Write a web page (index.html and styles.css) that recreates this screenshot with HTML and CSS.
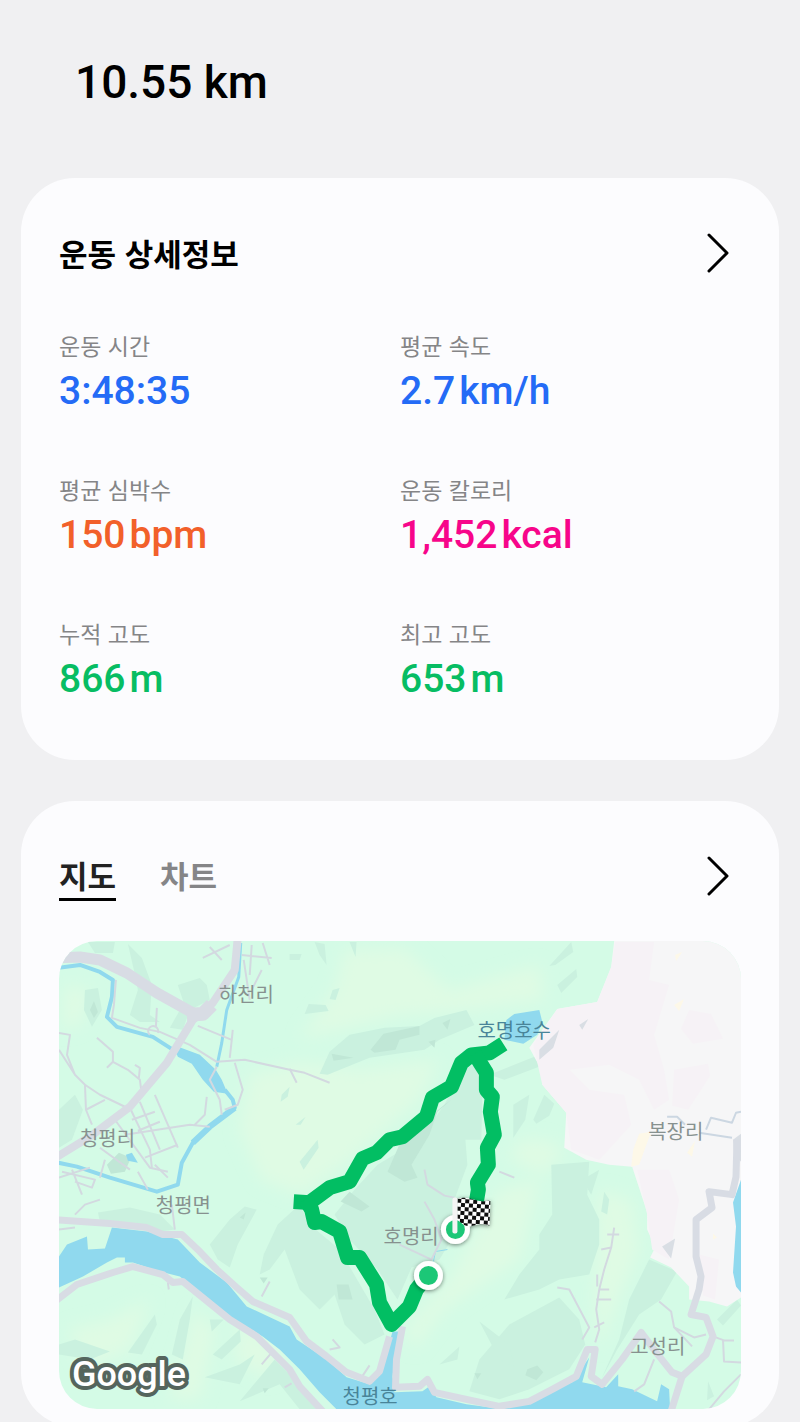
FILE: index.html
```html
<!DOCTYPE html>
<html lang="ko">

<head>
    <meta charset="UTF-8">
    <meta name="viewport" content="width=device-width, initial-scale=1.0">
    <title>운동 상세정보</title>
    <link rel="stylesheet" href="styles.css">
</head>

<body>
    <main class="container">
        <h1 class="distance">10.55 km</h1>

        <section class="card">
            <div class="card-header">
                <h2>운동 상세정보</h2>
                <button class="more" type="button" aria-label="운동 상세정보 더보기">
                    <svg viewBox="0 0 24 40"><path d="M2 2 L20 20 L2 38" /></svg>
                </button>
            </div>
            <dl class="stats">
                <div class="stat time">
                    <dt>운동 시간</dt>
                    <dd>3:48:35</dd>
                </div>
                <div class="stat speed">
                    <dt>평균 속도</dt>
                    <dd>2.7<span>km/h</span></dd>
                </div>
                <div class="stat heart">
                    <dt>평균 심박수</dt>
                    <dd>150<span>bpm</span></dd>
                </div>
                <div class="stat calorie">
                    <dt>운동 칼로리</dt>
                    <dd>1,452<span>kcal</span></dd>
                </div>
                <div class="stat altitude">
                    <dt>누적 고도</dt>
                    <dd>866<span>m</span></dd>
                </div>
                <div class="stat altitude">
                    <dt>최고 고도</dt>
                    <dd>653<span>m</span></dd>
                </div>
            </dl>
        </section>

        <section class="card map-card">
            <div class="card-header">
                <div class="tabs" role="tablist">
                    <button class="tab active" type="button" role="tab" aria-selected="true">지도</button>
                    <button class="tab" type="button" role="tab" aria-selected="false">차트</button>
                </div>
                <button class="more" type="button" aria-label="지도 더보기">
                    <svg viewBox="0 0 24 40"><path d="M2 2 L20 20 L2 38" /></svg>
                </button>
            </div>

            <svg class="map" viewBox="59 941 683 469">
                <defs>
                    <pattern id="checker" width="8" height="8" patternUnits="userSpaceOnUse" patternTransform="translate(458 1199) rotate(4)">
                        <rect width="8" height="8" fill="#fff" />
                        <path d="M0 0h4v4h-4z M4 4h4v4h-4z" fill="#111" />
                    </pattern>
                    <filter id="soft" x="-20%" y="-20%" width="140%" height="140%">
                        <feGaussianBlur stdDeviation="8" />
                    </filter>
                    <filter id="shadow" x="-30%" y="-30%" width="160%" height="160%">
                        <feDropShadow dx="0" dy="1" stdDeviation="2" flood-opacity="0.5" />
                    </filter>
                </defs>

                <rect class="land" x="59" y="941" width="683" height="469" />

                <!-- low hills -->
                <g class="hill" filter="url(#soft)">
                    <path d="M250 1075 L300 1062 L360 1070 L440 1060 L420 1100 L345 1165 L300 1195 L262 1180 L240 1130Z" />
                    <path d="M345 950 L405 948 L450 990 L540 965 L545 1000 L470 1010 L400 1015 L340 1030 L300 1040 L335 990Z" />
                    <path d="M600 1190 L632 1200 L640 1250 L615 1310 L600 1350 L595 1300Z" />
                    <path d="M500 1190 L540 1180 L520 1260 L445 1310 L415 1350 L405 1330 L450 1280Z" />
                    <path d="M68 1330 L110 1320 L150 1300 L130 1350 L85 1370Z" />
                    <path d="M195 1310 L215 1330 L200 1400 L170 1400Z" />
                    <path d="M65 985 L90 990 L80 1025 L62 1030Z" />
                    <path d="M545 1140 L565 1150 L545 1175 L510 1160 L520 1140Z" />
                    <path d="M240 1320 L285 1350 L270 1380 L235 1360Z" />
                </g>

                <!-- forest shading -->
                <g class="forest">
                    <path d="M320 1074 L330 1052 L350 1035 L385 1028 L420 1026 L435 1018 L467 1010 L475 1025 L440 1040 L425 1050 L370 1058 L328 1075Z" />
                    <path d="M128 944 L142 958 L152 985 L150 1015 L160 1022 L140 1022 L130 1015 L138 990 L134 970Z" />
                    <path d="M178 985 L200 978 L207 985 L210 1000 L190 1010 L183 1030 L170 1028 L184 1003Z" />
                    <path d="M85 990 L98 988 L102 1010 L92 1027 L84 1010Z" />
                    <path d="M59 1110 L75 1095 L83 1110 L72 1140 L59 1148Z" />
                    <path d="M88 942 L115 942 L113 953 L95 953Z" />
                    <path d="M464 1068 L476 1065 L483 1090 L482 1140 L466 1140 L468 1165 L455 1200 L455 1235 L440 1260 L412 1268 L398 1300 L378 1270 L350 1240 L335 1215 L355 1190 L378 1165 L420 1140 L445 1105Z" />
                    <path d="M210 1245 L230 1220 L245 1207 L257 1210 L238 1245 L230 1268 L218 1260Z" />
                    <path d="M260 1275 L264 1255 L278 1225 L300 1205 L310 1225 L340 1250 L375 1310 L385 1335 L365 1345 L345 1325 L335 1295 L320 1310 L300 1290 L285 1250 L270 1270Z" />
                    <path d="M98 1213 L130 1208 L160 1215 L175 1230 L160 1232 L100 1222Z" />
                    <path d="M59 1345 L75 1340 L110 1352 L90 1360 L59 1355Z" />
                    <path d="M172 1355 L180 1320 L193 1297 L190 1320 L183 1360Z" />
                    <path d="M128 1353 L155 1315 L157 1325 L142 1355Z" />
                    <path d="M213 1355 L240 1330 L241 1342 L222 1360Z" />
                    <path d="M210 1320h14l-12 12z M240 1365 L255 1355 L240 1385 L205 1378Z" />
                    <path d="M240 1402 L275 1360 L310 1395 L318 1410 L300 1410 L280 1385Z" />
                    <path d="M552 1165 L590 1162 L588 1195 L600 1220 L600 1245 L590 1275 L560 1280 L540 1290 L505 1300 L520 1275 L540 1250 L540 1235 L553 1215Z" />
                    <path d="M510 1325 L560 1298 L580 1320 L586 1345 L570 1370 L530 1390 L500 1400 L470 1392 L480 1360Z" />
                    <path d="M650 1260 L678 1272 L662 1300 L640 1315 L618 1350 L602 1380 L620 1340 L630 1300Z" />
                    <path d="M550 966 L572 942 L574 952 L556 965Z" />
                    <path d="M558 985 L577 969 L578 977 L562 993Z" />
                    <path d="M534 1120 L545 1095 L555 1104 L550 1116 L537 1124Z" />
                    <path d="M514 1105 L530 1095 L526 1120 L514 1138Z" />
                    <path d="M490 1075 L540 1055 L545 1065 L505 1080Z" />
                    <path d="M315 942 L325 944 L327 965 L320 955Z M350 942h7l-1 15z M290 954h12l-2 6h-10z M333 990l7-2-4 12-6-1z M309 1004l17 1 3 6-24 3z M438 970l-3 12z" />
                    <path d="M300 1162l18-22 1 8-15 22z M282 1095l8-8-2 10-7 5z M296 1125l10-8-5 8z" />
                    <path d="M583 1180 L600 1170 L592 1195Z M605 1192l5 8-2 15-6-3z M718 1320l20-20 4 6-18 20z M709 1382l6 15-7 4z" />
                    <path d="M480 1322 L510 1345 L515 1368 L500 1360Z M440 1365 L460 1347 L458 1360Z" />
                </g>
                <g class="forest-dark">
                    <path d="M371 1050 L384 1034 L420 1026 L420 1035 L400 1040 L396 1050 L375 1053Z" />
                    <path d="M388 1172 L402 1140 L445 1105 L452 1100 L438 1112 L430 1135 L412 1165 L418 1178 L405 1182Z" />
                    <path d="M341 1202 L350 1192 L370 1207 L362 1212Z M337 1285h12l4 15h-14z M528 1370l10-4 6 7-7 8-11-5z M332 1054l22 4-20 3z M443 1023l8-4-3 11z M429 1042l7-2-1 8z" />
                    <path d="M90 1010 L94 1001 L98 1012 L94 1018Z M107 1165l12-12 12 5-6 14-14 2z" />
                    <path d="M240 1218l6-5-2 7z M260 1278h8l-4 6z M263 1389h6l-4 5z M475 1374h7l-4 6z" />
                </g>

                <!-- open land on the east side -->
                <path class="plain" d="M615 941 L612 967 L598 1002 L558 1009 L530 1048 L542 1070 L543 1085 L567 1113 L565 1148 L587 1160 L610 1165 L633 1167 L648 1213 L648 1230 L656 1248 L651 1258 L672 1268 L690 1287 L690 1300 L710 1302 L728 1307 L742 1298 V941Z" />
                <g class="plain-tint">
                    <path d="M616 942 L612 967 L598 1002 L558 1009 L534 1045 L543 1085 L567 1113 L572 1150 L600 1160 L632 1125 L625 1095 L590 1090 L570 1070 L610 1065 L640 1080 L655 1110 L670 1100 L665 1070 L655 1035 L670 985 L650 980 L655 942Z" />
                    <path d="M690 1010l22 4 12 25-30 5-12-15z M675 1070l34-6 2 12-22 34-16-4z M638 1170 L670 1170 L680 1200 L670 1260 L653 1250 L648 1215Z M700 1255l20 5-4 40-12-4z" />
                </g>
                <g class="sand">
                    <path d="M634 1150 L640 1134 L652 1132 L640 1165 L632 1167Z M688 1153l8-12-3 16z M675 1005l10-6-5 12z M676 955l7-3-6 9z M714 1234l4 4-4 2z" />
                </g>
                <path class="rock" d="M580 1025l9-6-6 11z M540 1050l20-20-6 18-14 12z M663 1247l13-8-4 20z M734 1140l8-6v28l-7-8z" />

                <!-- rivers and lakes -->
                <g class="water">
                    <path d="M59 1257 L67 1245 L87 1237 L88 1250 L105 1249 L112 1228 L147 1232 L178 1240 L200 1263 L227 1283 L247 1307 L290 1327 L297 1340 L327 1360 L347 1378 L370 1385 L382 1373 L393 1332 L399 1332 L393 1377 L395 1393 L423 1392 L430 1387 L437 1398 L467 1405 L497 1409 L533 1400 L573 1383 L590 1358 L583 1383 L607 1388 L619 1375 L619 1387 L633 1390 L658 1402 L662 1385 L670 1390 L671 1410 H337 L320 1393 L300 1370 L280 1350 L263 1337 L230 1317 L200 1293 L180 1277 L160 1272 L133 1263 L125 1263 L125 1258 L117 1258 L107 1263 L83 1277 L59 1288Z" />
                    <path d="M507 1020 L515 1014 L540 1010 L543 1022 L538 1035 L524 1044 L505 1040Z" />
                    <path d="M742 1180 L734 1203 L737 1227 L734 1273 L737 1287 L742 1293Z" />
                    <path d="M173 1045 L200 1055 L216 1070 L222 1080 L228 1094 L214 1092 L203 1080 L192 1064 L178 1057Z" />
                    <path d="M126 1155l6-2 6 10-10-2z" />
                </g>
                <g class="stream">
                    <path stroke-width="4" d="M58 968 L80 965 L100 972 L113 980 L112 997 L107 1017 L117 1027 L153 1037 L178 1053" />
                    <path stroke-width="4" d="M225 1090 L233 1100 L235 1108 L210 1127 L193 1143 L182 1163 L178 1185 L157 1192 L110 1178 L77 1167 L58 1163" />
                    <path stroke-width="6" d="M235 1108 L210 1127 L193 1143" />
                    <path stroke-width="3" d="M241 943 L239 977 L227 1010 L222 1043 L217 1067" />
                    <path stroke-width="1" d="M434 1262 L436 1252 L448 1250" />
                </g>

                <!-- lanes -->
                <g class="lane">
                    <path d="M116 980 L114 1005 L112 1018 L140 1028 L160 1032 L190 1045 L217 1062 L245 1060 L290 1070 L305 1073 L330 1083" />
                    <path d="M59 1033 L70 1035 L67 1055 L75 1075 L85 1085 L86 1110 L92 1125 M59 1050 L75 1075 M85 1085 L100 1095 L125 1107 M86 1110 L105 1100" />
                    <path d="M97 1038 L113 1052 L113 1062 L128 1070 L140 1080 L142 1095 M113 1062 L107 1068 M135 1065 L140 1068 L139 1078" />
                    <path d="M130 1108 L150 1150 L152 1168 M140 1102 L160 1150 M155 1095 L178 1148 M125 1135 L190 1125 L210 1127 M145 1158 L178 1145 M100 1148 L130 1170 M115 1120 L150 1168 L168 1172 M132 1120 L155 1112 M138 1131 L160 1122 M105 1160 L100 1178 M207 1097 L205 1115 L195 1125" />
                    <path d="M62 1172 L95 1180 L92 1188 L75 1182 M72 1170 L82 1195 M59 1178 L90 1168 M138 1172 L148 1190 M155 1165 L168 1178" />
                    <path d="M203 958 L230 945 M210 947 L222 960 M242 955 L272 958 M252 945 L250 975 M263 943 L270 965 M262 970 L252 990 M244 960 L250 1000" />
                    <path d="M198 1026 L232 1040 L233 1030 M232 1040 L230 1058 M150 1035 A5 5 0 1 1 158 1033 M156 1028 L157 1008 M217 1067 L210 1080 L220 1100 L222 1115 M235 1063 L243 1090 L238 1105 L225 1110" />
                    <path d="M75 1215 L85 1205 L100 1200 M172 1205 L175 1230 M59 1230 L75 1228 M262 1297 L270 1282 M262 1365 L273 1352 M168 1283 L169 1290" />
                    <path d="M290 1069 L297 1083 M425 1170 L428 1185 L445 1196 L455 1198 M425 1202 L435 1220 L442 1240 L432 1260 L400 1245 M500 1172 L515 1178 M333 1340 L340 1348 L330 1350 M362 1378 L370 1366 M285 1388 L292 1384" />
                    <path d="M615 1228 L612 1248 L605 1270 L600 1290 L597 1310 L600 1330 L596 1343 M600 1290 L610 1290 M597 1300 L612 1300 M612 1248 L602 1250 M608 1235h12 M558 1288 L570 1290 L590 1328 L583 1340 M598 1275v12 M595 1328l10-5" />
                    <path d="M660 1302 L672 1312 L675 1328 L695 1338 L707 1335 M675 1328 L693 1347 M655 1360 L645 1385 L635 1392 M714 1337 L725 1341 L735 1341 M724 1341 L725 1362 L742 1363 M742 1375 L725 1392 L710 1410" />
                </g>
                <path class="lane blue" d="M668 1117h10l8 8 M700 1133 L733 1138 M707 1130 L712 1118 L733 1123 L737 1113 L742 1112" />

                <!-- main roads -->
                <g class="road">
                    <path stroke-width="11" d="M56 958 L80 957 L100 960 L127 973 L157 993 L193 1013" />
                    <path stroke-width="8" d="M238 938 L235 970 L213 1003 L193 1020 L167 1063 L130 1107 L90 1137 L54 1159" />
                    <path stroke-width="14" d="M187 1015 L203 1014 L212 1005" />
                    <path stroke-width="7" d="M55 1220 L110 1224 L147 1228 L163 1235 L182 1235 L200 1252 L217 1270 L237 1288 L253 1302 L290 1318 L307 1342 L327 1357 L347 1373 L370 1382 L380 1372 L390 1337" />
                    <path stroke-width="7" d="M403 1327 L397 1360 L396 1388 L420 1387 L428 1380 L435 1393 L467 1400 L500 1407 L530 1402 L553 1390 L577 1377 L588 1350 L596 1350 L592 1377 L603 1385 L623 1360 L642 1333 L657 1353 L673 1373 L683 1377 L707 1355 L714 1337 L707 1318 L692 1315 L700 1290 L702 1277 L697 1257 L697 1220 L713 1208 L710 1192 L733 1195 L737 1177 L738 1140" />
                    <path stroke-width="7" d="M683 1377 L672 1412" />
                    <path stroke-width="7" d="M55 1302 L77 1285 L113 1273 L133 1267 L163 1275 L173 1283 L183 1282 L230 1320 L257 1337 L290 1370 L300 1387 L325 1414" />
                </g>

                <g class="place">
                    <text x="219" y="1002">하천리</text>
                    <text x="80" y="1146">청평리</text>
                    <text x="156" y="1213">청평면</text>
                    <text x="384" y="1244">호명리</text>
                    <text x="649" y="1139">복장리</text>
                    <text x="631" y="1355">고성리</text>
                </g>

                <g class="place lake">
                    <text x="478" y="1038">호명호수</text>
                    <text x="343" y="1405">청평호</text>
                </g>

                <!-- walked route -->
                <path class="route" d="M504 1044 L490 1053 L472 1055 L462 1063 L452 1087 L433 1098 L427 1117 L403 1137 L390 1140 L377 1153 L363 1159 L350 1182 L330 1188 L310 1203 L294 1202" />
                <path class="route" d="M306 1200 L312 1210 L315 1223 L322 1222 L340 1232 L348 1258 L360 1258 L377 1285 L380 1303 L392 1325 L410 1307 L417 1290 L428 1276" />
                <path class="route" d="M475 1054 L487 1073 L487 1090 L493 1097 L491 1112 L495 1135 L488 1148 L489 1165 L478 1183 L479 1190 L476 1208" />

                <!-- start and finish -->
                <g filter="url(#shadow)">
                    <circle class="pin" cx="429" cy="1276" r="12" />
                    <circle class="pin" cx="456" cy="1230" r="12" />
                    <path fill="url(#checker)" d="M458 1199 Q466 1197 474 1200 T491 1201 L490 1226 Q482 1223 474 1226 T458 1220Z" />
                </g>
                <rect class="pole" x="453" y="1198" width="5" height="36" rx="2" />

                <text class="google" x="72" y="1387">Google</text>
            </svg>
        </section>
    </main>
</body>

</html>
```
FILE: styles.css
```css
* {
    margin: 0;
    padding: 0;
    box-sizing: border-box;
}

body {
    background-color: #f0f0f2;
    color: #000;
    font-family: "Noto Sans CJK KR", "Noto Sans", sans-serif;
}

button {
    border: none;
    background: none;
    font-family: inherit;
    cursor: pointer;
}

.container {
    height: 100vh;
    padding: 0 21px;
    overflow: hidden;
}

.distance {
    padding: 46px 54px 60px;
    font-family: Roboto, sans-serif;
    font-size: 46px;
    line-height: 72px;
    font-weight: 500;
}

.card {
    padding: 50px 38px 52px;
    margin-bottom: 41px;
    background-color: #fcfcfe;
    border-radius: 54px;
}

.card-header {
    display: flex;
    justify-content: space-between;
    align-items: center;
    height: 50px;
}

.card-header h2 {
    font-size: 31px;
    line-height: 50px;
    font-weight: 700;
}

.more {
    display: flex;
    padding: 0 10px;
}

.more svg {
    width: 24px;
    height: 40px;
    fill: none;
    stroke: #000;
    stroke-width: 3;
    stroke-linecap: round;
    stroke-linejoin: round;
}

/* Stats */
.stats {
    display: grid;
    grid-template-columns: 1fr 1fr;
    gap: 52px 0;
    margin-top: 50px;
}

.stat dt {
    color: #858587;
    font-size: 23px;
    line-height: 34px;
}

.stat dd {
    display: flex;
    gap: 4px;
    font-family: Roboto, sans-serif;
    font-size: 39px;
    line-height: 58px;
    font-weight: 500;
}

.time,
.speed {
    color: #246bf6;
}

.heart {
    color: #f2602a;
}

.calorie {
    color: #f7058a;
}

.altitude {
    color: #07bd63;
}

/* Map */
.map-card {
    padding-bottom: 18px;
    margin-bottom: 0;
}

.tabs {
    display: flex;
    gap: 44px;
}

.tab {
    height: 50px;
    border-bottom: 3px solid transparent;
    color: #858587;
    font-size: 31px;
    line-height: 44px;
    font-weight: 700;
}

.tab.active {
    border-color: #000;
    color: #222;
}

.map {
    display: block;
    width: 100%;
    margin-top: 40px;
    border-radius: 38px;
}

.land {
    fill: #d4fbe6;
}

.hill {
    fill: #dffbe4;
}

.forest {
    fill: #caf1df;
}

.forest-dark {
    fill: #c0e7d6;
}

.plain {
    fill: #f6f6f7;
}

.plain-tint {
    fill: #f6f2f6;
}

.sand {
    fill: #fdf8e8;
}

.rock {
    fill: #d9dee4;
}

.water {
    fill: #90d9ee;
}

.stream {
    fill: none;
    stroke: #90d9ee;
    stroke-linejoin: round;
}

.lane {
    fill: none;
    stroke: #d3d9e0;
    stroke-width: 2;
    stroke-linejoin: round;
}

.lane.blue {
    stroke: #ccd7e2;
}

.road {
    fill: none;
    stroke: #d8dce4;
    stroke-linejoin: round;
}

.place {
    fill: #87918f;
    font-size: 20px;
}

.lake {
    fill: #498499;
}

.route {
    fill: none;
    stroke: #02be63;
    stroke-width: 15;
    stroke-linejoin: round;
}

.pin {
    fill: #1fc777;
    stroke: #fff;
    stroke-width: 5;
}

.pole {
    fill: #f4f4f4;
}

.google {
    fill: #fff;
    stroke: #55655d;
    stroke-width: 8;
    stroke-linejoin: round;
    paint-order: stroke;
    font-family: Roboto, sans-serif;
    font-size: 36px;
    font-weight: 500;
}
```
